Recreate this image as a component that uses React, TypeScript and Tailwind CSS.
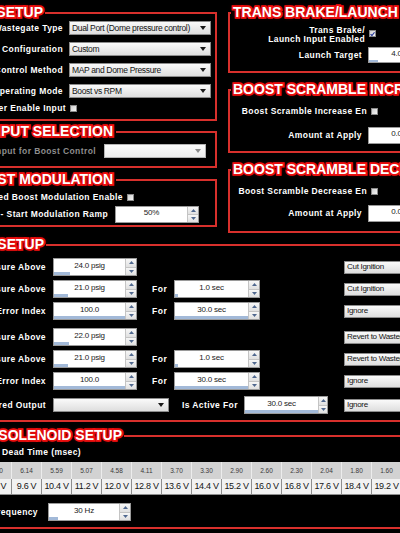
import React from "react"

const RED = "border-[#d8302c]"
const BODY = `border-x-2 border-b-2 ${RED}`

function PanelHead({ title, titleClass }: { title: string; titleClass: string }) {
  return (
    <div className="flex h-[16px]">
      <div className={`mt-[8px] w-[3px] flex-none border-l-2 border-t-2 ${RED}`} />
      <h2
        className={`flex flex-none whitespace-nowrap text-[14px] font-bold leading-[16px] text-white [paint-order:stroke_fill] [-webkit-text-stroke:3.5px_#ff1414] [text-shadow:0_0_4px_#b00000] ${titleClass}`}
      >
        {title}
      </h2>
      <div className={`mt-[8px] flex-1 border-r-2 border-t-2 ${RED}`} />
    </div>
  )
}

function Label({ w, children, grey }: { w: string; children: React.ReactNode; grey?: boolean }) {
  return (
    <div
      className={`flex flex-none justify-end whitespace-nowrap text-[8.5px] font-bold leading-none tracking-[0.4px] ${grey ? "text-[#8e8e8e]" : "text-white"} ${w}`}
    >
      {children}
    </div>
  )
}

function Check({ checked, className = "" }: { checked?: boolean; className?: string }) {
  return (
    <div
      className={`flex h-[7px] w-[7px] flex-none items-center justify-center border border-[#8a8a8a] bg-linear-to-br from-[#cfcfcf] to-[#f6f6f6] ${className}`}
    >
      {checked && (
        <svg width="6" height="6" viewBox="0 0 6 6">
          <path d="M0.7 3.1 L2.3 4.8 L5.4 0.9" stroke="#2a3c9c" strokeWidth="1.4" fill="none" />
        </svg>
      )}
    </div>
  )
}

function Select({
  value,
  className,
  disabled,
  big,
}: {
  value: string
  className: string
  disabled?: boolean
  big?: boolean
}) {
  return (
    <div
      className={`flex flex-none items-center overflow-hidden border pl-[2px] ${
        disabled
          ? "border-[#b4b4b4] bg-linear-to-b from-[#fbfbfb] to-[#ececec]"
          : "border-[#8c8c8c] bg-linear-to-b from-[#fafafa] to-[#dedede]"
      } ${big ? "text-[8.5px] tracking-[-0.35px]" : "text-[8px] tracking-[-0.3px]"} text-[#141414] ${className}`}
    >
      <span className="flex-1 whitespace-nowrap">{value}</span>
      <svg className="mr-[4px] flex-none" width="6" height="4" viewBox="0 0 6 4">
        <polygon points="0,0 6,0 3,4" fill={disabled ? "#8a8a8a" : "#1a1a1a"} />
      </svg>
    </div>
  )
}

function Arrow({ up }: { up?: boolean }) {
  return (
    <svg width="5" height="3" viewBox="0 0 5 3">
      <polygon points={up ? "0,3 2.5,0 5,3" : "0,0 5,0 2.5,3"} fill="#50688f" />
    </svg>
  )
}

function Spin({ value, bar, className }: { value: string; bar: number; className: string }) {
  return (
    <div className={`flex flex-none border border-[#9a9a9a] bg-white ${className}`}>
      <div className="flex flex-1 flex-col">
        <div className="flex flex-1 items-center justify-center whitespace-nowrap text-[8px] tracking-[-0.2px] text-[#1a1a1a]">
          {value}
        </div>
        <div className="h-[3px] bg-[#a2b9d8]" style={{ width: bar }} />
      </div>
      <div className="flex w-[11px] flex-col border-l border-[#c4c4c4]">
        <div className="flex flex-1 items-center justify-center border-b border-[#c4c4c4] bg-linear-to-b from-[#f7f7f7] to-[#e0e0e0]">
          <Arrow up />
        </div>
        <div className="flex flex-1 items-center justify-center bg-linear-to-b from-[#f7f7f7] to-[#e0e0e0]">
          <Arrow />
        </div>
      </div>
    </div>
  )
}

type SetupRow = {
  label: string
  value: string
  bar: number
  forValue?: string
  forBar?: number
  action: string
  gap: string
}

const setupRows: SetupRow[] = [
  { label: "Overboost Pressure Above", value: "24.0 psig", bar: 16, action: "Cut Ignition", gap: "" },
  { label: "Overboost Pressure Above", value: "21.0 psig", bar: 14, forValue: "1.0 sec", forBar: 3, action: "Cut Ignition", gap: "mt-[4px]" },
  { label: "Boost Error Index", value: "100.0", bar: 71, forValue: "30.0 sec", forBar: 73, action: "Ignore", gap: "mt-[4px]" },
  { label: "Underboost Pressure Above", value: "22.0 psig", bar: 15, action: "Revert to Wastegate", gap: "mt-[8px]" },
  { label: "Underboost Pressure Above", value: "21.0 psig", bar: 14, forValue: "1.0 sec", forBar: 3, action: "Revert to Wastegate", gap: "mt-[4px]" },
  { label: "Boost Error Index", value: "100.0", bar: 71, forValue: "30.0 sec", forBar: 73, action: "Ignore", gap: "mt-[4px]" },
]

const deadTimes = [
  ["7.60", "8.0 V"],
  ["6.80", "8.8 V"],
  ["6.14", "9.6 V"],
  ["5.59", "10.4 V"],
  ["5.07", "11.2 V"],
  ["4.58", "12.0 V"],
  ["4.11", "12.8 V"],
  ["3.70", "13.6 V"],
  ["3.30", "14.4 V"],
  ["2.90", "15.2 V"],
  ["2.60", "16.0 V"],
  ["2.30", "16.8 V"],
  ["2.04", "17.6 V"],
  ["1.80", "18.4 V"],
  ["1.60", "19.2 V"],
  ["1.45", "20.0 V"],
]

export default function App() {
  return (
    <div className="h-[533px] w-[400px] overflow-hidden bg-black font-['Liberation_Sans',Arial,sans-serif] text-white">
      <div className="ml-[-60px] w-[620px]">
        <div className="flex items-start pt-[4px]">
          {/* left column */}
          <div className="w-[277px] flex-none">
            <PanelHead title="BOOST SETUP" titleClass="w-[102px] justify-end pr-[2px]" />
            <div className={`${BODY} flex flex-col gap-[7px] pb-[7px] pt-[1px]`}>
              <div className="flex h-[14px] items-center">
                <Label w="w-[121px]">Wastegate Type</Label>
                <Select big value="Dual Port (Dome pressure control)" className="ml-[6px] h-[14px] w-[142px]" />
              </div>
              <div className="flex h-[14px] items-center">
                <Label w="w-[121px]">Wastegate Configuration</Label>
                <Select big value="Custom" className="ml-[6px] h-[14px] w-[142px]" />
              </div>
              <div className="flex h-[14px] items-center">
                <Label w="w-[121px]">Boost Control Method</Label>
                <Select big value="MAP and Dome Pressure" className="ml-[6px] h-[14px] w-[142px]" />
              </div>
              <div className="flex h-[14px] items-center">
                <Label w="w-[121px]">Operating Mode</Label>
                <Select big value="Boost vs RPM" className="ml-[6px] h-[14px] w-[142px]" />
              </div>
              <div className="flex h-[7px] items-center">
                <Label w="w-[124px]">Boost Controller Enable Input</Label>
                <Check className="ml-[4px]" />
              </div>
            </div>

            <div className="mt-[2px]">
              <PanelHead title="INPUT SELECTION" titleClass="w-[173px] justify-end pr-[3px]" />
              <div className={`${BODY} pb-[8px] pt-[5px]`}>
                <div className="flex h-[14px] items-center">
                  <Label w="w-[154px]" grey>
                    Input for Boost Control
                  </Label>
                  <Select disabled value="" className="ml-[8px] h-[14px] w-[102px]" />
                </div>
              </div>
            </div>

            <div className="mt-[3px]">
              <PanelHead title="BOOST MODULATION" titleClass="w-[173px] justify-end pr-[3px]" />
              <div className={`${BODY} flex flex-col gap-[5px] pb-[2px] pt-[7px]`}>
                <div className="flex h-[7px] items-center">
                  <Label w="w-[181px]">Speed Based Boost Modulation Enable</Label>
                  <Check className="ml-[4px]" />
                </div>
                <div className="flex h-[17px] items-center">
                  <Label w="w-[166px]">Speed - Start Modulation Ramp</Label>
                  <Spin value="50%" bar={0} className="ml-[7px] h-[17px] w-[84px]" />
                </div>
              </div>
            </div>
          </div>

          {/* right column */}
          <div className="ml-[11px] w-[332px] flex-none">
            <PanelHead title="TRANS BRAKE/LAUNCH CONTROL" titleClass="px-[2px]" />
            <div className={`${BODY} flex flex-col gap-[3px] pb-[8px] pt-[6px]`}>
              <div className="flex items-start">
                <div className="w-[135px] flex-none text-right text-[8.5px] font-bold leading-[9px] tracking-[0.4px]">
                  Trans Brake/
                  <br />
                  Launch Input Enabled
                </div>
                <Check checked className="ml-[4px] mt-[4px]" />
              </div>
              <div className="flex h-[16px] items-center">
                <Label w="w-[132px]">Launch Target</Label>
                <Spin value="4.0 psig" bar={9} className="ml-[6px] h-[16px] w-[84px]" />
              </div>
            </div>

            <div className="mt-[8px]">
              <PanelHead title="BOOST SCRAMBLE INCREASE" titleClass="px-[2px]" />
              <div className={`${BODY} flex flex-col gap-[12px] pb-[7px] pt-[11px]`}>
                <div className="flex h-[7px] items-center">
                  <Label w="w-[137px]">Boost Scramble Increase En</Label>
                  <Check className="ml-[4px]" />
                </div>
                <div className="flex h-[17px] items-center">
                  <Label w="w-[132px]">Amount at Apply</Label>
                  <Spin value="0.0 psig" bar={0} className="ml-[6px] h-[17px] w-[84px]" />
                </div>
              </div>
            </div>

            <div className="mt-[8px]">
              <PanelHead title="BOOST SCRAMBLE DECREASE" titleClass="px-[2px]" />
              <div className={`${BODY} flex flex-col gap-[10px] pb-[9px] pt-[11px]`}>
                <div className="flex h-[7px] items-center">
                  <Label w="w-[137px]">Boost Scramble Decrease En</Label>
                  <Check className="ml-[4px]" />
                </div>
                <div className="flex h-[17px] items-center">
                  <Label w="w-[132px]">Amount at Apply</Label>
                  <Spin value="0.0 psig" bar={0} className="ml-[6px] h-[17px] w-[84px]" />
                </div>
              </div>
            </div>
          </div>
        </div>

        {/* failsafe setup */}
        <div className="mt-[3px]">
          <PanelHead title="FAILSAFE SETUP" titleClass="w-[103px] justify-end pr-[2px]" />
          <div className={`${BODY} pb-[6px] pt-[6px]`}>
            {setupRows.map((r, i) => (
              <div key={i} className={`flex h-[18px] items-center ${r.gap}`}>
                <Label w="w-[104px]">{r.label}</Label>
                <Spin value={r.value} bar={r.bar} className="ml-[7px] h-[18px] w-[84px]" />
                <div className="flex h-[18px] w-[207px] flex-none items-center">
                  {r.forValue && (
                    <>
                      <div className="ml-[15px] w-[22px] flex-none text-[8.5px] font-bold leading-none tracking-[0.6px]">
                        For
                      </div>
                      <Spin value={r.forValue} bar={r.forBar ?? 0} className="h-[18px] w-[86px]" />
                    </>
                  )}
                </div>
                <Select value={r.action} className="h-[13px] w-[110px]" />
              </div>
            ))}
            <div className="mt-[6px] flex h-[18px] items-center">
              <Label w="w-[104px]">Monitored Output</Label>
              <Select value="" className="ml-[7px] h-[14px] w-[116px]" />
              <div className="ml-[13px] w-[62px] flex-none whitespace-nowrap text-[8.5px] font-bold leading-none tracking-[0.4px]">
                Is Active For
              </div>
              <Spin value="30.0 sec" bar={73} className="h-[18px] w-[84px]" />
              <Select value="Ignore" className="ml-[16px] h-[13px] w-[110px]" />
            </div>
          </div>
        </div>

        {/* solenoid setup */}
        <div className="mt-[5px]">
          <PanelHead title="BOOST SOLENOID SETUP" titleClass="w-[181px] justify-end pr-[2px]" />
          <div className={`${BODY} pb-[6px] pt-[4px]`}>
            <div className="ml-[60px] whitespace-nowrap text-[8.5px] font-bold leading-[10px] tracking-[0.4px]">
              Dead Time (msec)
            </div>
            <div className="ml-[10px] mt-[5px] flex">
              {deadTimes.map(([ms, volts]) => (
                <div key={volts} className="flex w-[30px] flex-none flex-col">
                  <div className="flex h-[17px] items-center justify-center border-r border-[#ececec] bg-[#d2d2d2] text-[6.5px] text-[#3a3a3a]">
                    {ms}
                  </div>
                  <div className="flex h-[16px] items-center justify-center whitespace-nowrap border-b border-r border-[#8e8e8e] bg-[#f2f2f2] text-[9px] tracking-[-0.3px] text-[#141414]">
                    {volts}
                  </div>
                </div>
              ))}
            </div>
            <div className="mt-[8px] flex h-[18px] items-center">
              <Label w="w-[96px]">Solenoid Frequency</Label>
              <Spin value="30 Hz" bar={9} className="ml-[10px] h-[18px] w-[83px]" />
            </div>
          </div>
        </div>
      </div>
    </div>
  )
}
